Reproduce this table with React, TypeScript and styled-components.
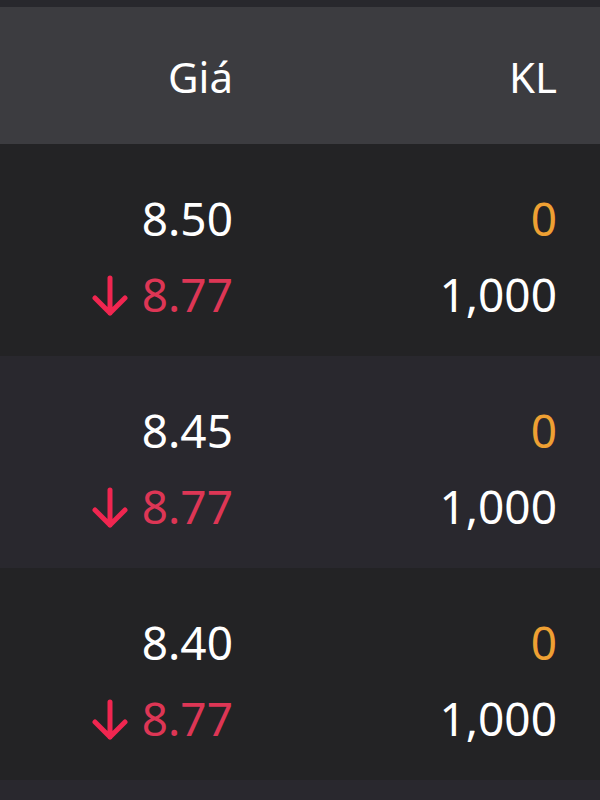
import React from "react";
import styled, { createGlobalStyle } from "styled-components";

const GlobalStyle = createGlobalStyle`
  html, body {
    margin: 0;
    padding: 0;
    background-color: #232325;
  }
  body {
    font-family: "Noto Sans", "Open Sans", sans-serif;
  }
`;

const Container = styled.div`
  width: 600px;
  height: 800px;
  overflow: hidden;
  background-color: #29282e;
  border-top: 7px solid #28282d;
  box-sizing: border-box;
`;

const Grid = styled.div`
  display: grid;
  grid-template-columns: 233px 1fr;
  padding-right: 43px;
  align-items: center;
`;

const Header = styled(Grid)`
  height: 137px;
  background-color: #3c3c40;
  color: #ffffff;
  font-size: 42px;
`;

const HeaderCell = styled.div`
  text-align: right;
  padding-top: 2px;
`;

const Row = styled(Grid)<{ $alt?: boolean }>`
  height: 212px;
  box-sizing: border-box;
  padding-top: 36px;
  align-content: start;
  background-color: ${props => (props.$alt ? "#29282e" : "#232325")};
  font-size: 46px;
  line-height: 76px;
`;

const Cell = styled.div<{ $color?: string }>`
  display: flex;
  justify-content: flex-end;
  align-items: center;
  color: ${props => props.$color || "#ffffff"};
`;

const Arrow = styled.svg`
  width: 36px;
  height: 42px;
  margin-right: 14px;
  margin-top: 4px;
`;

const RED = "#dd3655";
const ORANGE = "#eea033";

const DownArrow = () => (
  <Arrow viewBox="0 0 36 42">
    <path
      d="M18 3 V38 M3 23 L18 38 L33 23"
      fill="none"
      stroke="#f02650"
      strokeWidth={5}
      strokeLinecap="round"
      strokeLinejoin="round"
    />
  </Arrow>
);

const rows = [
  { price: "8.50", ref: "8.77", qty: "0", vol: "1,000" },
  { price: "8.45", ref: "8.77", qty: "0", vol: "1,000" },
  { price: "8.40", ref: "8.77", qty: "0", vol: "1,000" },
];

const App: React.FunctionComponent = () => {
  return (
    <>
      <GlobalStyle />
      <Container>
        <Header>
          <HeaderCell>Giá</HeaderCell>
          <HeaderCell>KL</HeaderCell>
        </Header>
        {rows.map((r, i) => (
          <Row key={i} $alt={i % 2 === 1}>
            <Cell>{r.price}</Cell>
            <Cell $color={ORANGE}>{r.qty}</Cell>
            <Cell $color={RED}>
              <DownArrow />
              {r.ref}
            </Cell>
            <Cell>{r.vol}</Cell>
          </Row>
        ))}
      </Container>
    </>
  );
};

export default App;
